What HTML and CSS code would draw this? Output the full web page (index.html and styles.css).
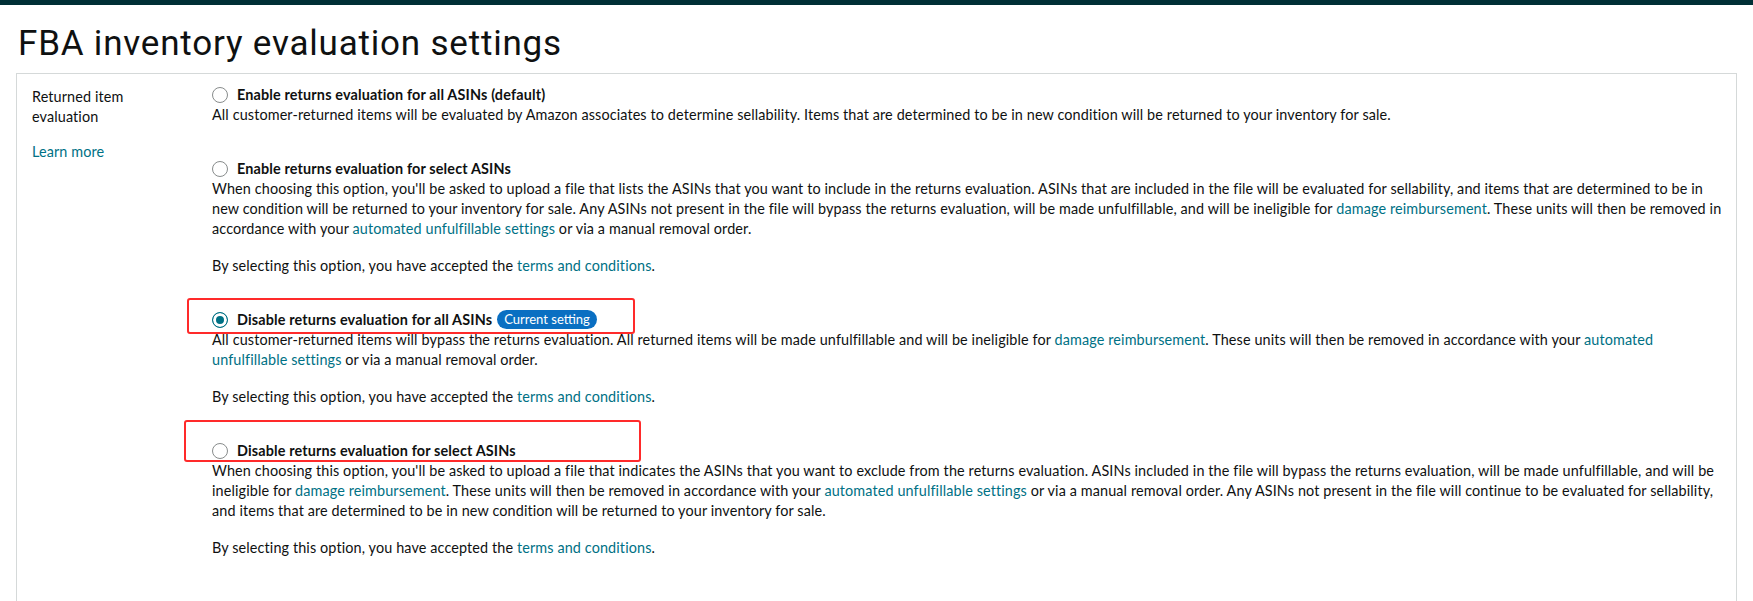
FILE: index.html
```html
<!DOCTYPE html>
<html lang="en">

<head>
  <meta charset="UTF-8">
  <meta name="viewport" content="width=device-width, initial-scale=1.0">
  <title>FBA inventory evaluation settings</title>
  <link rel="stylesheet" href="styles.css">
</head>

<body>
  <div class="topbar"></div>

  <h1 class="page-title">FBA inventory evaluation settings</h1>

  <div class="settings-box">
    <div class="setting-label">
      <p class="label-text">Returned item evaluation</p>
      <a class="link" href="#">Learn more</a>
    </div>

    <div class="setting-options">
      <!-- option 1 -->
      <div class="option">
        <div class="option-head">
          <span class="radio"></span>
          <span class="option-title">Enable returns evaluation for all ASINs (default)</span>
        </div>
        <p class="option-desc">All customer-returned items will be evaluated by Amazon associates to determine sellability. Items that are determined to be in new condition will be returned to your inventory for sale.</p>
      </div>

      <!-- option 2 -->
      <div class="option">
        <div class="option-head">
          <span class="radio"></span>
          <span class="option-title">Enable returns evaluation for select ASINs</span>
        </div>
        <p class="option-desc">When choosing this option, you'll be asked to upload a file that lists the ASINs that you want to include in the returns evaluation. ASINs that are included in the file will be evaluated for sellability, and items that are determined to be in new condition will be returned to your inventory for sale. Any ASINs not present in the file will bypass the returns evaluation, will be made unfulfillable, and will be ineligible for <a class="link" href="#">damage reimbursement</a>. These units will then be removed in accordance with your <a class="link" href="#">automated unfulfillable settings</a> or via a manual removal order.</p>
        <p class="option-terms">By selecting this option, you have accepted the <a class="link" href="#">terms and conditions</a>.</p>
      </div>

      <!-- option 3: current setting -->
      <div class="option">
        <div class="option-head">
          <span class="radio checked"></span>
          <span class="option-title">Disable returns evaluation for all ASINs</span>
          <span class="badge">Current setting</span>
        </div>
        <p class="option-desc">All customer-returned items will bypass the returns evaluation. All returned items will be made unfulfillable and will be ineligible for <a class="link" href="#">damage reimbursement</a>. These units will then be removed in accordance with your <a class="link" href="#">automated unfulfillable settings</a> or via a manual removal order.</p>
        <p class="option-terms">By selecting this option, you have accepted the <a class="link" href="#">terms and conditions</a>.</p>
        <div class="mark mark-one"></div>
      </div>

      <!-- option 4 -->
      <div class="option">
        <div class="option-head">
          <span class="radio"></span>
          <span class="option-title">Disable returns evaluation for select ASINs</span>
        </div>
        <p class="option-desc">When choosing this option, you'll be asked to upload a file that indicates the ASINs that you want to exclude from the returns evaluation. ASINs included in the file will bypass the returns evaluation, will be made unfulfillable, and will be ineligible for <a class="link" href="#">damage reimbursement</a>. These units will then be removed in accordance with your <a class="link" href="#">automated unfulfillable settings</a> or via a manual removal order. Any ASINs not present in the file will continue to be evaluated for sellability, and items that are determined to be in new condition will be returned to your inventory for sale.</p>
        <p class="option-terms">By selecting this option, you have accepted the <a class="link" href="#">terms and conditions</a>.</p>
        <div class="mark mark-two"></div>
      </div>
    </div>
  </div>
</body>

</html>
```

FILE: styles.css
```css
body {
  margin: 0;
  font-family: "Lato", "Liberation Sans", sans-serif;
  font-size: 14.4px;
  line-height: 20px;
  letter-spacing: 0.12px;
  color: #0f1111;
  background: #fff;
}

.topbar {
  height: 5px;
  background-color: #002f36;
}

.page-title {
  margin: 19px 0 9px 18px;
  font-family: "Roboto", "Lato", sans-serif;
  font-size: 35px;
  line-height: 40px;
  font-weight: 400;
  letter-spacing: 0.8px;
}

/* 设置面板 */
.settings-box {
  display: grid;
  grid-template-columns: 180px 1fr;
  margin: 0 16px;
  padding: 10px 10px 60px 15px;
  border: 1px solid #d5d9d9;
}

.setting-label {
  padding-top: 3px;
}

.label-text {
  width: 130px;
  margin: 0 0 15px;
}

.link {
  color: #007185;
  text-decoration: none;
}

.option {
  position: relative;
  margin-top: 33px;
}

.option:first-child {
  margin-top: 0;
}

.option-head {
  display: flex;
  align-items: center;
  line-height: 21px;
}

.option-title {
  font-weight: 700;
  letter-spacing: 0.15px;
}

.radio {
  box-sizing: border-box;
  width: 16px;
  height: 16px;
  margin-right: 9px;
  border: 1px solid #888c8c;
  border-radius: 50%;
  background: #fff;
}

.radio.checked {
  border-color: #007185;
  background: #007185;
  box-shadow: inset 0 0 0 3px #fff;
}

.badge {
  margin-left: 5px;
  padding: 0 7px;
  line-height: 19px;
  font-size: 13px;
  letter-spacing: 0;
  color: #fff;
  background-color: #0a6fc2;
  border-radius: 10px;
}

.option-desc {
  margin: 0;
}

.option-terms {
  margin: 17px 0 0;
}

/* 截图上的红色标注框 */
.mark {
  position: absolute;
  border: 2px solid #ff2a2a;
  border-radius: 3px;
  box-sizing: border-box;
}

.mark-one {
  top: -11px;
  left: -25px;
  width: 448px;
  height: 36px;
}

.mark-two {
  top: -20px;
  left: -28px;
  width: 457px;
  height: 42px;
}
```
